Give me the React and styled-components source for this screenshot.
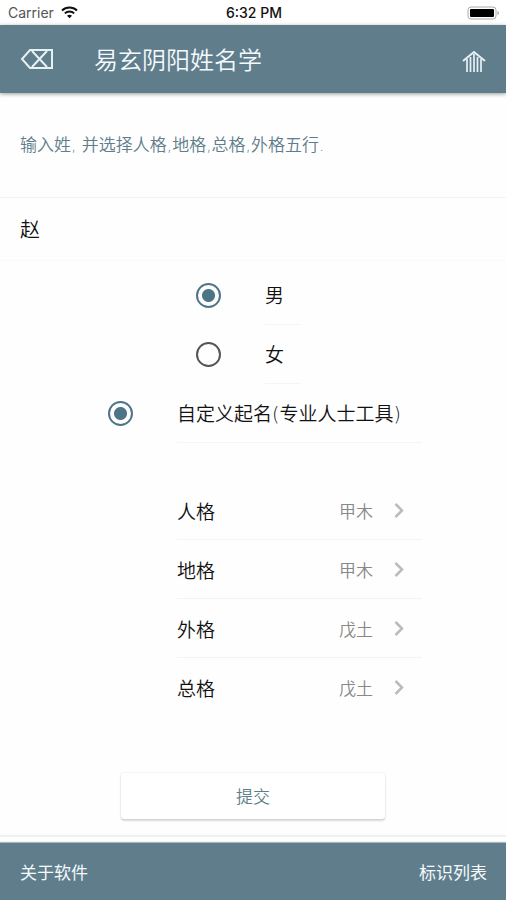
import React, { useState } from "react";
import styled, { createGlobalStyle } from "styled-components";

const slate = "#607d8b";

const GlobalStyle = createGlobalStyle`
  * { box-sizing: border-box; }
  body { margin: 0; background: #fefefe; }
  body, button, input {
    font-family: "Noto Sans CJK SC", "Noto Sans", sans-serif;
    font-weight: 350;
  }
  button { border: 0; background: none; padding: 0; cursor: pointer; }
`;

const Page = styled.div`
  display: flex;
  flex-direction: column;
  min-height: 100vh;
`;

const StatusBar = styled.div`
  display: grid;
  grid-template-columns: 1fr auto 1fr;
  align-items: center;
  height: 25px;
  padding: 0 6px 0 8px;
  background: #fff;
  font-family: Inter, "Liberation Sans", sans-serif;
  font-size: 14px;
  line-height: 24px;
`;

const Carrier = styled.span`
  display: flex;
  align-items: center;
  gap: 7px;
  color: #555;
  font-weight: 400;
`;

const Clock = styled.time`
  color: #111;
  font-weight: 500;
`;

const Battery = styled.svg`
  justify-self: end;
`;

const Header = styled.header`
  display: flex;
  align-items: center;
  height: 68px;
  padding: 0 20px;
  background: ${slate};
  color: #f4fafd;
  box-shadow: 0 1px 4px rgba(0, 0, 0, 0.4);
`;

const Title = styled.h1`
  flex: 1;
  margin: 0 0 0 40px;
  font-size: 24px;
  line-height: 32px;
  font-weight: 350;
`;

const IconButton = styled.button`
  display: flex;
  color: #fff;
`;

const Main = styled.main`
  flex: 1;
  display: flex;
  flex-direction: column;
`;

const Prompt = styled.label`
  height: 105px;
  padding: 0 20px;
  border-bottom: 1px solid #f3f3f3;
  color: ${slate};
  font-family: "DejaVu Sans", "Noto Sans CJK SC", sans-serif;
  font-size: 17px;
  line-height: 104px;
`;

const SurnameInput = styled.input`
  width: 100%;
  height: 63px;
  padding: 0 20px 2px;
  border: 0;
  border-bottom: 1px solid #fafafa;
  outline: 0;
  background: transparent;
  color: #111;
  font-size: 20px;
`;

const Form = styled.form`
  display: flex;
  flex-direction: column;
  flex: 1;
`;

const Choices = styled.div`
  display: flex;
  flex-direction: column;
  align-self: center;
  width: ${(p) => p.$width}px;
  max-width: 100%;
  padding-left: 24px;
  margin-top: ${(p) => p.$top || 0}px;
`;

const Choice = styled.label`
  display: flex;
  align-items: center;
  gap: 44px;
  height: 59px;
  color: #111;
  font-family: "DejaVu Sans", "Noto Sans CJK SC", sans-serif;
  font-size: 19px;
  white-space: nowrap;
`;

const ChoiceText = styled.span`
  flex: ${(p) => (p.$fill ? "1" : "0 0 36px")};
  height: 59px;
  line-height: 60px;
  border-bottom: 1px solid #f5f5f5;
`;

const Radio = styled.input.attrs({ type: "radio" })`
  appearance: none;
  flex: none;
  width: 25px;
  height: 25px;
  margin: 0;
  border: 2px solid #555;
  border-radius: 50%;
  &:checked {
    border-color: #4d7588;
    background: radial-gradient(circle, #4d7588 6px, transparent 7px);
  }
`;

const Grids = styled.div`
  margin: 38px 0 0 69px;
`;

const GridRow = styled.button`
  display: flex;
  align-items: center;
  width: 100%;
  height: 59px;
  padding: 0 17px 0 0;
  color: #111;
  font-size: 19px;
  &:not(:last-child) { border-bottom: 1px solid #f3f3f3; }
`;

const GridValue = styled.span`
  margin: 0 21px 0 auto;
  color: #888;
  font-size: 17px;
`;

const Submit = styled.button`
  align-self: center;
  width: 52%;
  height: 46px;
  margin: 56px 0 24px;
  padding-bottom: 2px;
  border-radius: 3px;
  background: #fff;
  color: ${slate};
  font-size: 17px;
  box-shadow: 0 2px 2px rgba(0, 0, 0, 0.14), 0 0 2px rgba(0, 0, 0, 0.12);
`;

const Footer = styled.footer`
  display: flex;
  justify-content: space-between;
  align-items: center;
  height: 58px;
  padding: 0 19px 2px 20px;
  background: ${slate};
  box-shadow: 0 -1px 1px #a9b9c0, 0 -6px 0 #fff, 0 -8px 1px #f0f2f2;
`;

const FooterLink = styled.a`
  color: #f4fafd;
  font-size: 17px;
  font-weight: 400;
  text-decoration: none;
`;

const WifiIcon = () => (
  <svg width="17" height="13" viewBox="0 0 17 13" fill="none" stroke="#111" strokeWidth="2" aria-hidden="true">
    <path d="M1 4.500C5.200 .5 11.800 .5 16 4.500M3.800 7.400c2.600-2.500 6.800-2.500 9.400 0" />
    <path d="M8.500 12.300L6 9.800c1.400-1.300 3.600-1.300 5 0z" fill="#111" stroke="none" />
  </svg>
);

const BatteryIcon = () => (
  <Battery width="33" height="14" viewBox="0 0 33 14" aria-hidden="true">
    <rect x="1" y="1" width="28" height="12" rx="3" fill="#fff" stroke="#aaa" />
    <rect x="3" y="3" width="24" height="8" rx="1" fill="#000" />
    <path d="M30.500 5v4c2-.6 2-3.400 0-4z" fill="#aaa" />
  </Battery>
);

const EraseIcon = () => (
  <svg width="34" height="22" viewBox="0 0 34 22" fill="none" stroke="#e6f1f6" strokeWidth="2" aria-hidden="true">
    <path d="M10 2h22v18H10L2 11zM12 3l15 16M27 3L12 19" />
  </svg>
);

const HomeIcon = () => (
  <svg width="24" height="30" viewBox="0 -6 24 30" fill="none" stroke="#e6f1f6" aria-hidden="true">
    <path d="M1 11L12 2l11 9" strokeWidth="2" />
    <path d="M5 9v13M8.500 7v15M12 4v18M15.500 7v15M19 9v13" strokeWidth="1.700" />
  </svg>
);

const ChevronIcon = () => (
  <svg width="11" height="17" viewBox="0 0 11 17" fill="none" stroke="#bbb" strokeWidth="2.500" aria-hidden="true">
    <path d="M1.500 2l6.500 6.500L1.500 15" />
  </svg>
);

const grids = [
  ["人格", "甲木"],
  ["地格", "甲木"],
  ["外格", "戊土"],
  ["总格", "戊土"],
];

export default function App() {
  const [surname, setSurname] = useState("赵");
  return (
    <>
      <GlobalStyle />
      <Page>
        <StatusBar>
          <Carrier>Carrier <WifiIcon /></Carrier>
          <Clock>6:32 PM</Clock>
          <BatteryIcon />
        </StatusBar>
        <Header>
          <IconButton type="button" aria-label="清除"><EraseIcon /></IconButton>
          <Title>易玄阴阳姓名学</Title>
          <IconButton type="button" aria-label="主页"><HomeIcon /></IconButton>
        </Header>
        <Main>
          <Form onSubmit={(e) => e.preventDefault()}>
            <Prompt htmlFor="surname">输入姓, 并选择人格,地格,总格,外格五行.</Prompt>
            <SurnameInput id="surname" type="text" value={surname} onChange={(e) => setSurname(e.target.value)} />
            <Choices $width={162} $top={5}>
              <Choice><Radio name="gender" defaultChecked /><ChoiceText>男</ChoiceText></Choice>
              <Choice><Radio name="gender" /><ChoiceText>女</ChoiceText></Choice>
            </Choices>
            <Choices $width={338}>
              <Choice><Radio name="mode" defaultChecked /><ChoiceText $fill>自定义起名(专业人士工具)</ChoiceText></Choice>
              <Grids>
                {grids.map(([name, value]) => (
                  <GridRow key={name} type="button">
                    {name}
                    <GridValue>{value}</GridValue>
                    <ChevronIcon />
                  </GridRow>
                ))}
              </Grids>
            </Choices>
            <Submit type="submit">提交</Submit>
          </Form>
        </Main>
        <Footer>
          <FooterLink href="#about">关于软件</FooterLink>
          <FooterLink href="#symbols">标识列表</FooterLink>
        </Footer>
      </Page>
    </>
  );
}
